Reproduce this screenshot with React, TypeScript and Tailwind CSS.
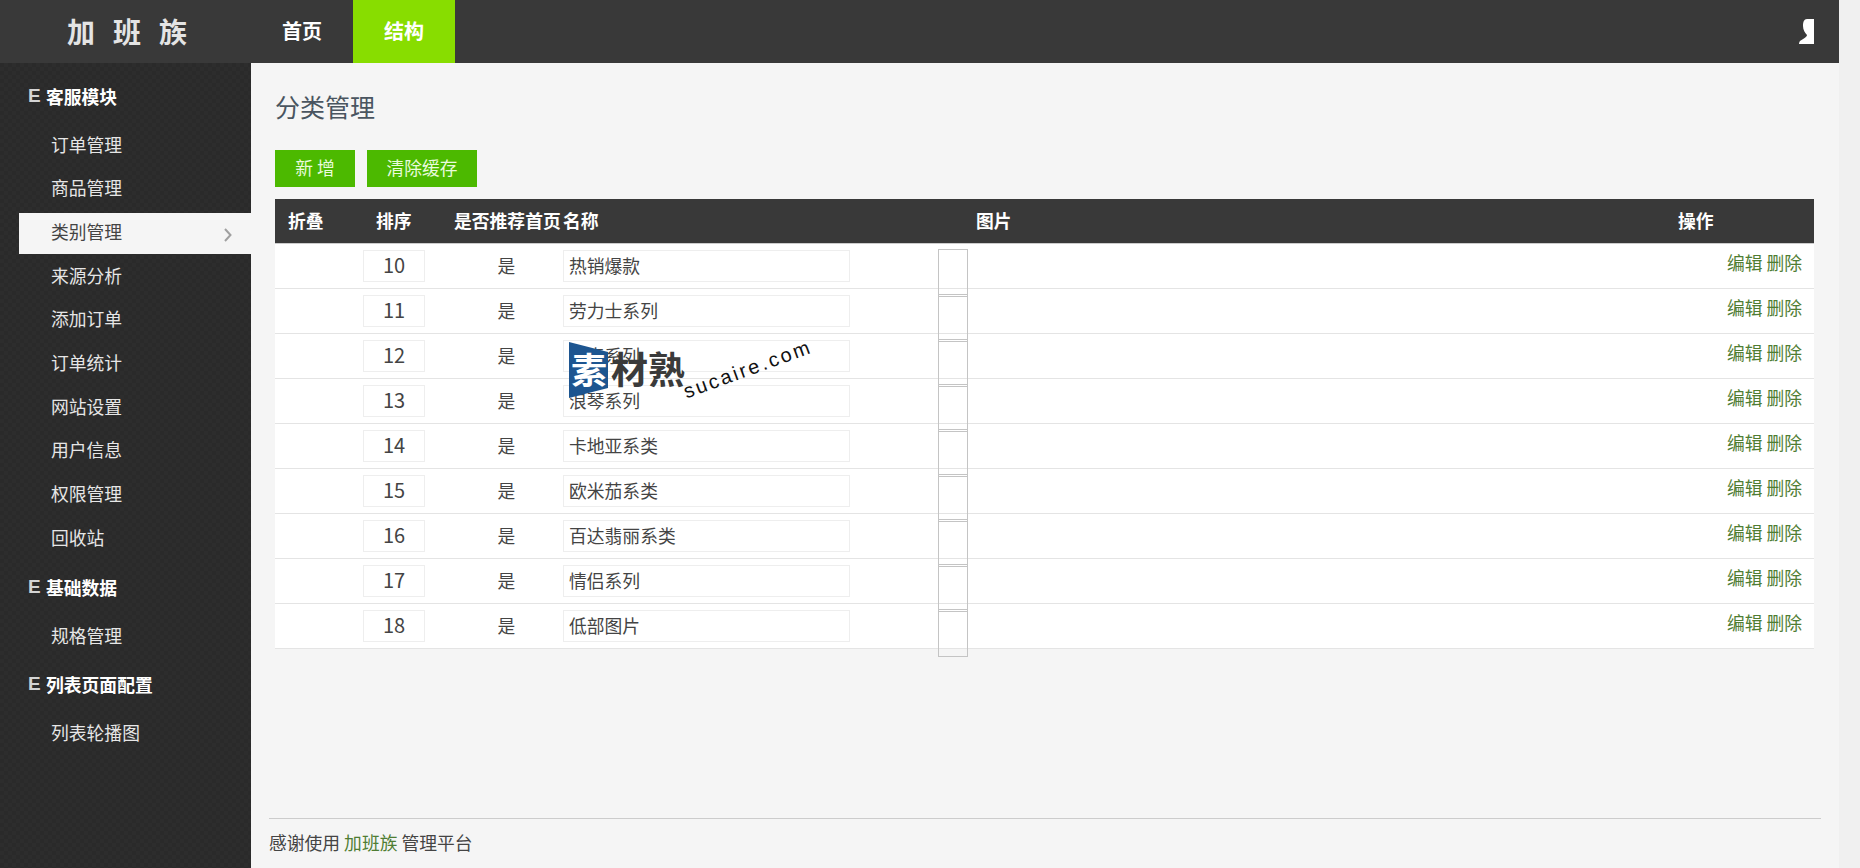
import React from "react";

const rows = [
  ["10", "热销爆款"],
  ["11", "劳力士系列"],
  ["12", "名表系列"],
  ["13", "浪琴系列"],
  ["14", "卡地亚系类"],
  ["15", "欧米茄系类"],
  ["16", "百达翡丽系类"],
  ["17", "情侣系列"],
  ["18", "低部图片"],
];

function GroupTitle({ label, spacing }: { label: string; spacing: string }) {
  return (
    <div className={`flex h-[44px] items-center pl-[28px] ${spacing}`}>
      <span className="-mt-[2px] w-[18px] font-['Liberation_Sans',sans-serif] text-[19px] font-bold leading-none text-[#d4d4d4]">E</span>
      <span className="text-[17.8px] font-bold text-white">{label}</span>
    </div>
  );
}

function Item({ label, active }: { label: string; active?: boolean }) {
  return (
    <div
      className={`ml-[19px] mb-[2.7px] flex h-[41px] items-center justify-between pb-[5px] pl-[32px] pr-[19px] text-[17.8px] ${
        active ? "bg-[#f5f5f5] text-[#444444]" : "text-[#e6e6e6]"
      }`}
    >
      <span>{label}</span>
      {active && (
        <svg className="mt-[7px]" width="8" height="14" viewBox="0 0 8 14" fill="none" stroke="#a0a0a0" strokeWidth="2">
          <path d="M1 1l5.5 6L1 13" />
        </svg>
      )}
    </div>
  );
}

export default function App() {
  return (
    <div className="flex h-[868px] w-[1860px] overflow-hidden bg-[#f0f0f0] font-['Noto_Sans_CJK_SC','Liberation_Sans',sans-serif]">
      <div className="flex w-[1839px] flex-col">
        <header className="flex h-[63px] items-center bg-[#393939] text-white">
          <div className="w-[251px] pb-[2px] pl-[67px] text-[28px] font-bold tracking-[18px] text-[#e4e4e4]">加班族</div>
          <div className="flex h-full w-[102px] items-center justify-center pb-[2px] text-[20px] font-bold">首页</div>
          <div className="flex h-full w-[102px] items-center justify-center bg-[#88dd00] pb-[2px] text-[20px] font-bold">结构</div>
          <div className="ml-auto mr-[25px] h-[25px] w-[15px]">
            <svg width="15" height="25" viewBox="0 0 15 25" fill="#ffffff">
              <path d="M15 0L8 0C5 0 4 3 4 7C4 11 6 14 8 16C8 18 4 20 1 22C0 23 0 25 0 25L15 25Z" />
            </svg>
          </div>
        </header>
        <div className="flex min-h-0 flex-1">
          <aside className="w-[251px] shrink-0 bg-[#2b2b2b] bg-[repeating-conic-gradient(#2d2d2d_0_25%,#2a2a2a_0_50%)] bg-[length:8px_8px]">
            <GroupTitle label="客服模块" spacing="mt-[11px]" />
            <div className="mt-[8px]">
              <Item label="订单管理" />
              <Item label="商品管理" />
              <Item label="类别管理" active />
              <Item label="来源分析" />
              <Item label="添加订单" />
              <Item label="订单统计" />
              <Item label="网站设置" />
              <Item label="用户信息" />
              <Item label="权限管理" />
              <Item label="回收站" />
            </div>
            <GroupTitle label="基础数据" spacing="mt-[5px]" />
            <div className="mt-[8px]">
              <Item label="规格管理" />
            </div>
            <GroupTitle label="列表页面配置" spacing="mt-[4px]" />
            <div className="mt-[8.5px]">
              <Item label="列表轮播图" />
            </div>
          </aside>
          <main className="relative flex min-w-0 flex-1 flex-col bg-[#f5f5f5]">
            <div className="flex-1 pl-[24px] pr-[25px]">
              <h1 className="flex h-[87px] items-center pt-[1px] text-[25px] font-normal text-[#4a5560]">分类管理</h1>
              <div className="flex gap-[12px]">
                <button className="h-[37px] w-[80px] bg-[#4cb900] pb-[2px] text-[17.8px] text-[#e9fbdc]">新 增</button>
                <button className="h-[37px] w-[110px] bg-[#4cb900] pb-[2px] text-[17.8px] text-[#e9fbdc]">清除缓存</button>
              </div>
              <div className="mt-[12px]">
                <div className="grid h-[45px] grid-cols-[88px_78px_122px_375px_1fr_149px] items-center border-b border-[#cccccc] bg-[#393939] pb-[2px] text-[17.8px] font-bold text-white">
                  <div className="pl-[13px]">折叠</div>
                  <div className="pl-[13px]">排序</div>
                  <div className="whitespace-nowrap pl-[13px]">是否推荐首页</div>
                  <div>名称</div>
                  <div className="pl-[38px]">图片</div>
                  <div className="pl-[13px]">操作</div>
                </div>
                {rows.map(([n, name]) => (
                  <div
                    key={n}
                    className="grid h-[45px] grid-cols-[88px_78px_122px_375px_1fr_149px] items-center border-b border-[#e4e4e4] bg-white text-[17.8px] text-[#444444]"
                  >
                    <div />
                    <div className="flex h-[32px] w-[62px] items-center justify-center border border-[#eeeeee] pb-[2px] text-[20px]">{n}</div>
                    <div className="pb-[2px] pl-[9px] text-center">是</div>
                    <div className="flex h-[32px] w-[287px] items-center border border-[#eeeeee] pb-[2px] pl-[5px]">{name}</div>
                    <div className="relative h-full">
                      <div className="absolute left-0 top-[5px] h-[48px] w-[30px] border border-[#c4c4c4]" />
                    </div>
                    <div className="-mt-[8px] pr-[12px] text-right text-[#4f7d33]">编辑 删除</div>
                  </div>
                ))}
              </div>
            </div>
            <footer className="mx-[18px] mb-0 flex h-[50px] items-center border-t border-[#cccccc] pb-[2px] text-[17.8px] text-[#444444]">
              <span>感谢使用&nbsp;</span>
              <span className="text-[#4f7d33]">加班族</span>
              <span>&nbsp;管理平台</span>
            </footer>
          </main>
        </div>
      </div>

      {/* watermark */}
      <div className="pointer-events-none absolute left-[569px] top-[342px] h-[60px] w-[245px]">
        <svg className="absolute left-0 top-0" width="40" height="56" viewBox="0 0 40 56" fill="#1d5590">
          <path d="M0 0L39 10L39 46L0 56Z" />
        </svg>
        <span className="absolute left-[2px] top-[6px] text-[36px] font-bold leading-[40px] text-white">素</span>
        <span className="absolute left-[42px] top-[6px] text-[37px] font-bold leading-[40px] text-[#3a3a3a]">材熟</span>
        <span className="absolute left-[115px] top-[38px] origin-left -rotate-[20deg] font-['Liberation_Sans',sans-serif] text-[20px] font-medium leading-[24px] tracking-[2.5px] whitespace-nowrap text-[#111111]">
          sucaire.com
        </span>
      </div>
    </div>
  );
}
